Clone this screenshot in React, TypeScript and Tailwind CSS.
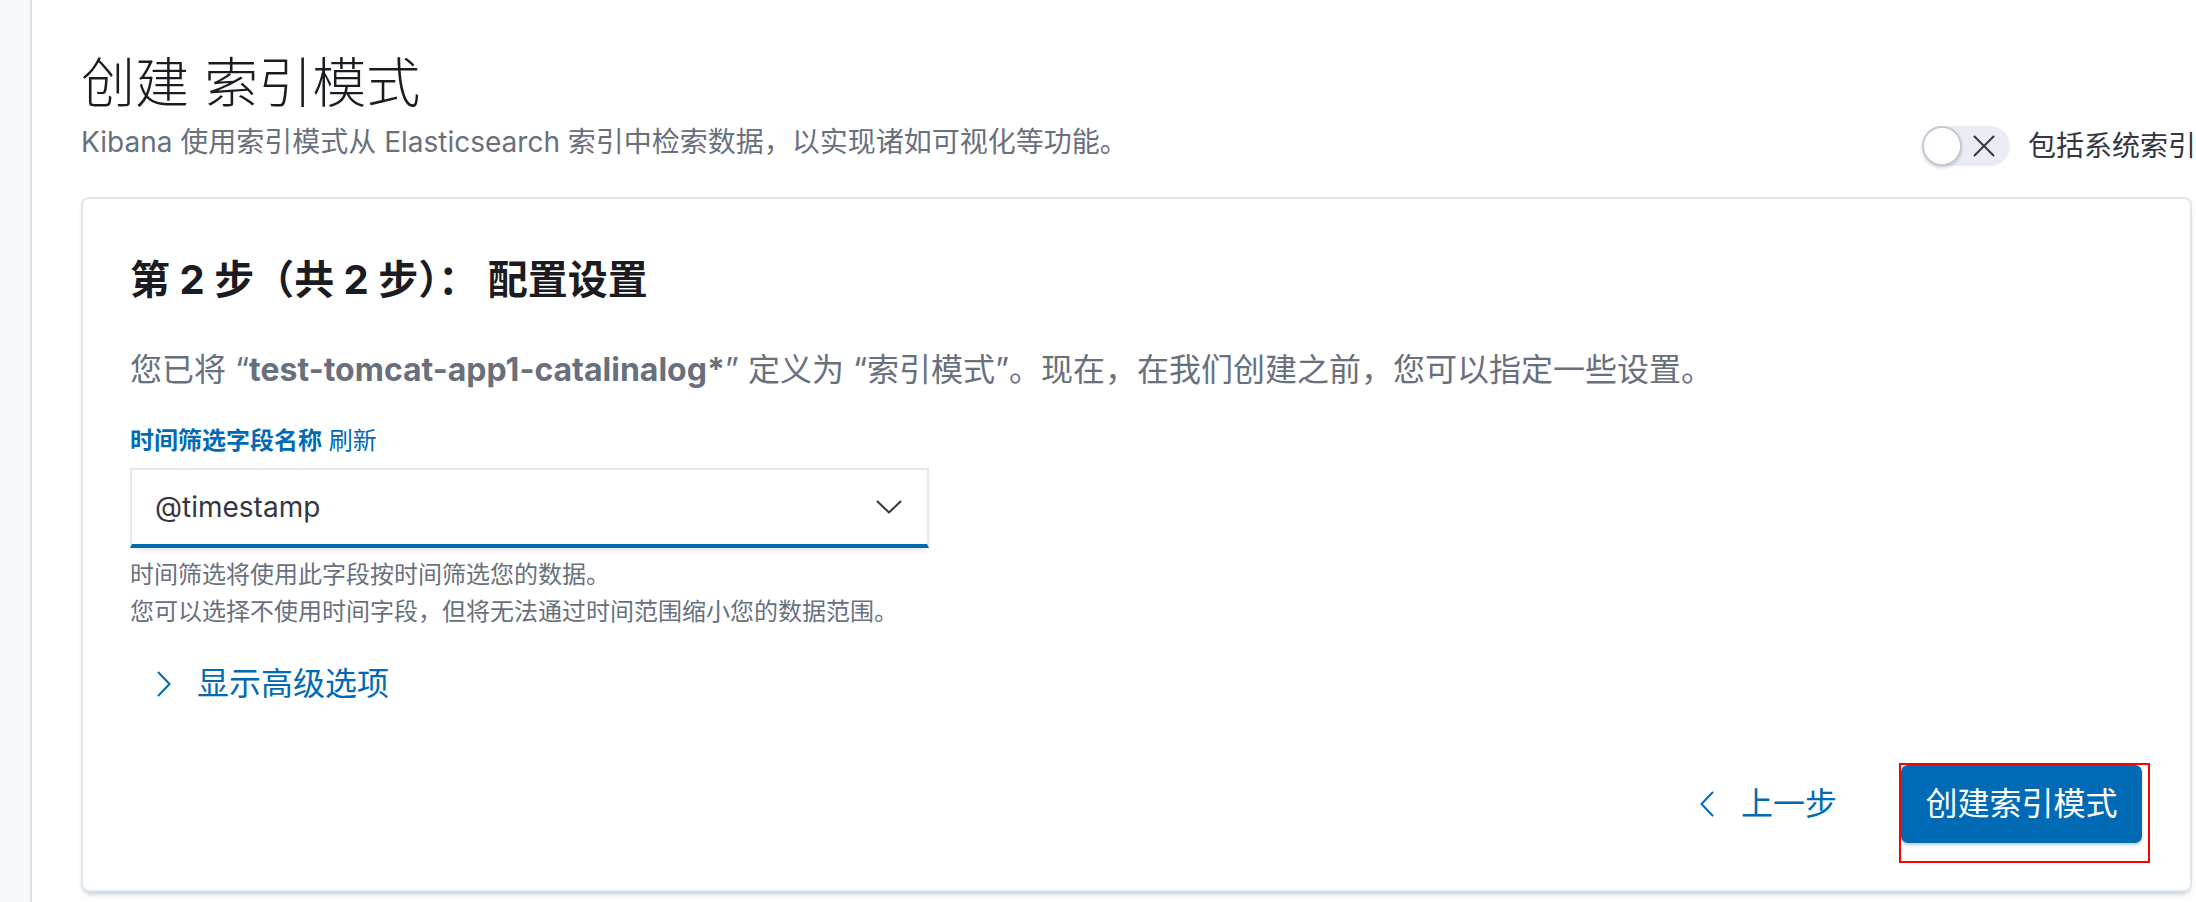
import React from "react";

const ChevronDown = () => (
  <svg width="32" height="32" viewBox="0 0 32 32" fill="none" stroke="#343741" strokeWidth="2" strokeLinecap="round" strokeLinejoin="round">
    <polyline points="4.5,10.5 16,21.5 27.5,10.5" />
  </svg>
);

const ChevronRight = () => (
  <svg width="32" height="32" viewBox="0 0 32 32" fill="none" stroke="#006bb4" strokeWidth="2" strokeLinecap="round" strokeLinejoin="round">
    <polyline points="10.5,4.5 21.5,16 10.5,27.5" />
  </svg>
);

const ChevronLeft = () => (
  <svg width="32" height="32" viewBox="0 0 32 32" fill="none" stroke="#006bb4" strokeWidth="2" strokeLinecap="round" strokeLinejoin="round">
    <polyline points="21.5,4.5 10.5,16 21.5,27.5" />
  </svg>
);

const XIcon = () => (
  <svg width="22" height="22" viewBox="0 0 22 22" fill="none" stroke="#343741" strokeWidth="2" strokeLinecap="round">
    <line x1="1.5" y1="1.5" x2="20.5" y2="20.5" />
    <line x1="20.5" y1="1.5" x2="1.5" y2="20.5" />
  </svg>
);

export default function App() {
  return (
    <div className="flex h-[902px] w-full overflow-hidden bg-white font-['Inter','Noto_Sans_CJK_SC',sans-serif]">
      <div className="w-[32px] shrink-0 bg-[#f7f8fb] border-r-2 border-[#d9dfe9]" />
      <div className="flex-1 min-w-0 pl-[49px] pt-[52px]">
        <div className="flex items-end justify-between">
          <div>
            <h1 className="text-[54px] leading-[64px] font-extralight text-[#1a1c21]">创建 索引模式</h1>
            <p className="mt-[6px] text-[28px] leading-[40px] text-[#69707d]">
              Kibana 使用索引模式从 Elasticsearch 索引中检索数据，以实现诸如可视化等功能。
            </p>
          </div>
          <div className="flex items-center gap-[18px] mb-[-4px]">
            <div className="relative h-[40px] w-[88px] rounded-full bg-[#e9edf3]">
              <div className="absolute left-0 top-0 h-[40px] w-[40px] rounded-full bg-white border-2 border-[#c4cad5] shadow-[0_2px_3px_rgba(152,162,179,0.45)]" />
              <div className="absolute left-[51px] top-[9px]">
                <XIcon />
              </div>
            </div>
            <span className="whitespace-nowrap text-[28px] leading-[40px] text-[#343741]">包括系统索引</span>
          </div>
        </div>

        <div className="mt-[35px] mr-[4px] rounded-[8px] border-2 border-[#e0e5ee] bg-white px-[47px] pt-[51px] pb-[47px] shadow-[0_2px_4px_-2px_rgba(152,162,179,0.5),0_6px_6px_-4px_rgba(152,162,179,0.4)]">
          <h2 className="text-[40px] leading-[60px] font-bold text-[#1a1c21]">第 2 步（共 2 步）： 配置设置</h2>
          <p className="mt-[36px] text-[32px] leading-[48px] text-[#69707d]">
            您已将 “<span className="font-bold">test-tomcat-app1-catalinalog*</span>” 定义为 “索引模式”。现在，在我们创建之前，您可以指定一些设置。
          </p>

          <div className="mt-[29px] text-[24px] leading-[36px] text-[#006bb4]">
            <span className="font-bold">时间筛选字段名称</span> <span>刷新</span>
          </div>

          <div className="mt-[9px] flex h-[80px] w-[799px] items-center justify-between border-2 border-b-4 border-[#e3e7ee] border-b-[#006bb4] bg-white pl-[23px] pr-[22px] shadow-[0_5px_8px_-5px_rgba(0,0,0,0.18)]">
            <span className="text-[28px] leading-[40px] text-[#343741]">@timestamp</span>
            <ChevronDown />
          </div>

          <div className="mt-[8px] text-[24px] leading-[37px] text-[#69707d]">
            <div>时间筛选将使用此字段按时间筛选您的数据。</div>
            <div>您可以选择不使用时间字段，但将无法通过时间范围缩小您的数据范围。</div>
          </div>

          <div className="mt-[30px] ml-[18px] flex h-[48px] items-center gap-[17px] text-[32px] leading-[48px] text-[#006bb4]">
            <ChevronRight />
            <span>显示高级选项</span>
          </div>

          <div className="mt-[57px] flex items-center justify-end gap-[64px]">
            <div className="flex items-center gap-[18px] text-[32px] leading-[48px] text-[#006bb4]">
              <ChevronLeft />
              <span>上一步</span>
            </div>
            <div className="relative mr-[1px]">
              <div className="flex h-[78px] w-[241px] items-center justify-center rounded-[7px] bg-[#006bb4] text-[32px] leading-[48px] text-white shadow-[0_2px_3px_rgba(0,60,120,0.25)]">
                创建索引模式
              </div>
              <div className="pointer-events-none absolute left-[-2px] top-[-2px] h-[100px] w-[251px] border-2 border-[#ff0000]" />
            </div>
          </div>
        </div>
      </div>
    </div>
  );
}
